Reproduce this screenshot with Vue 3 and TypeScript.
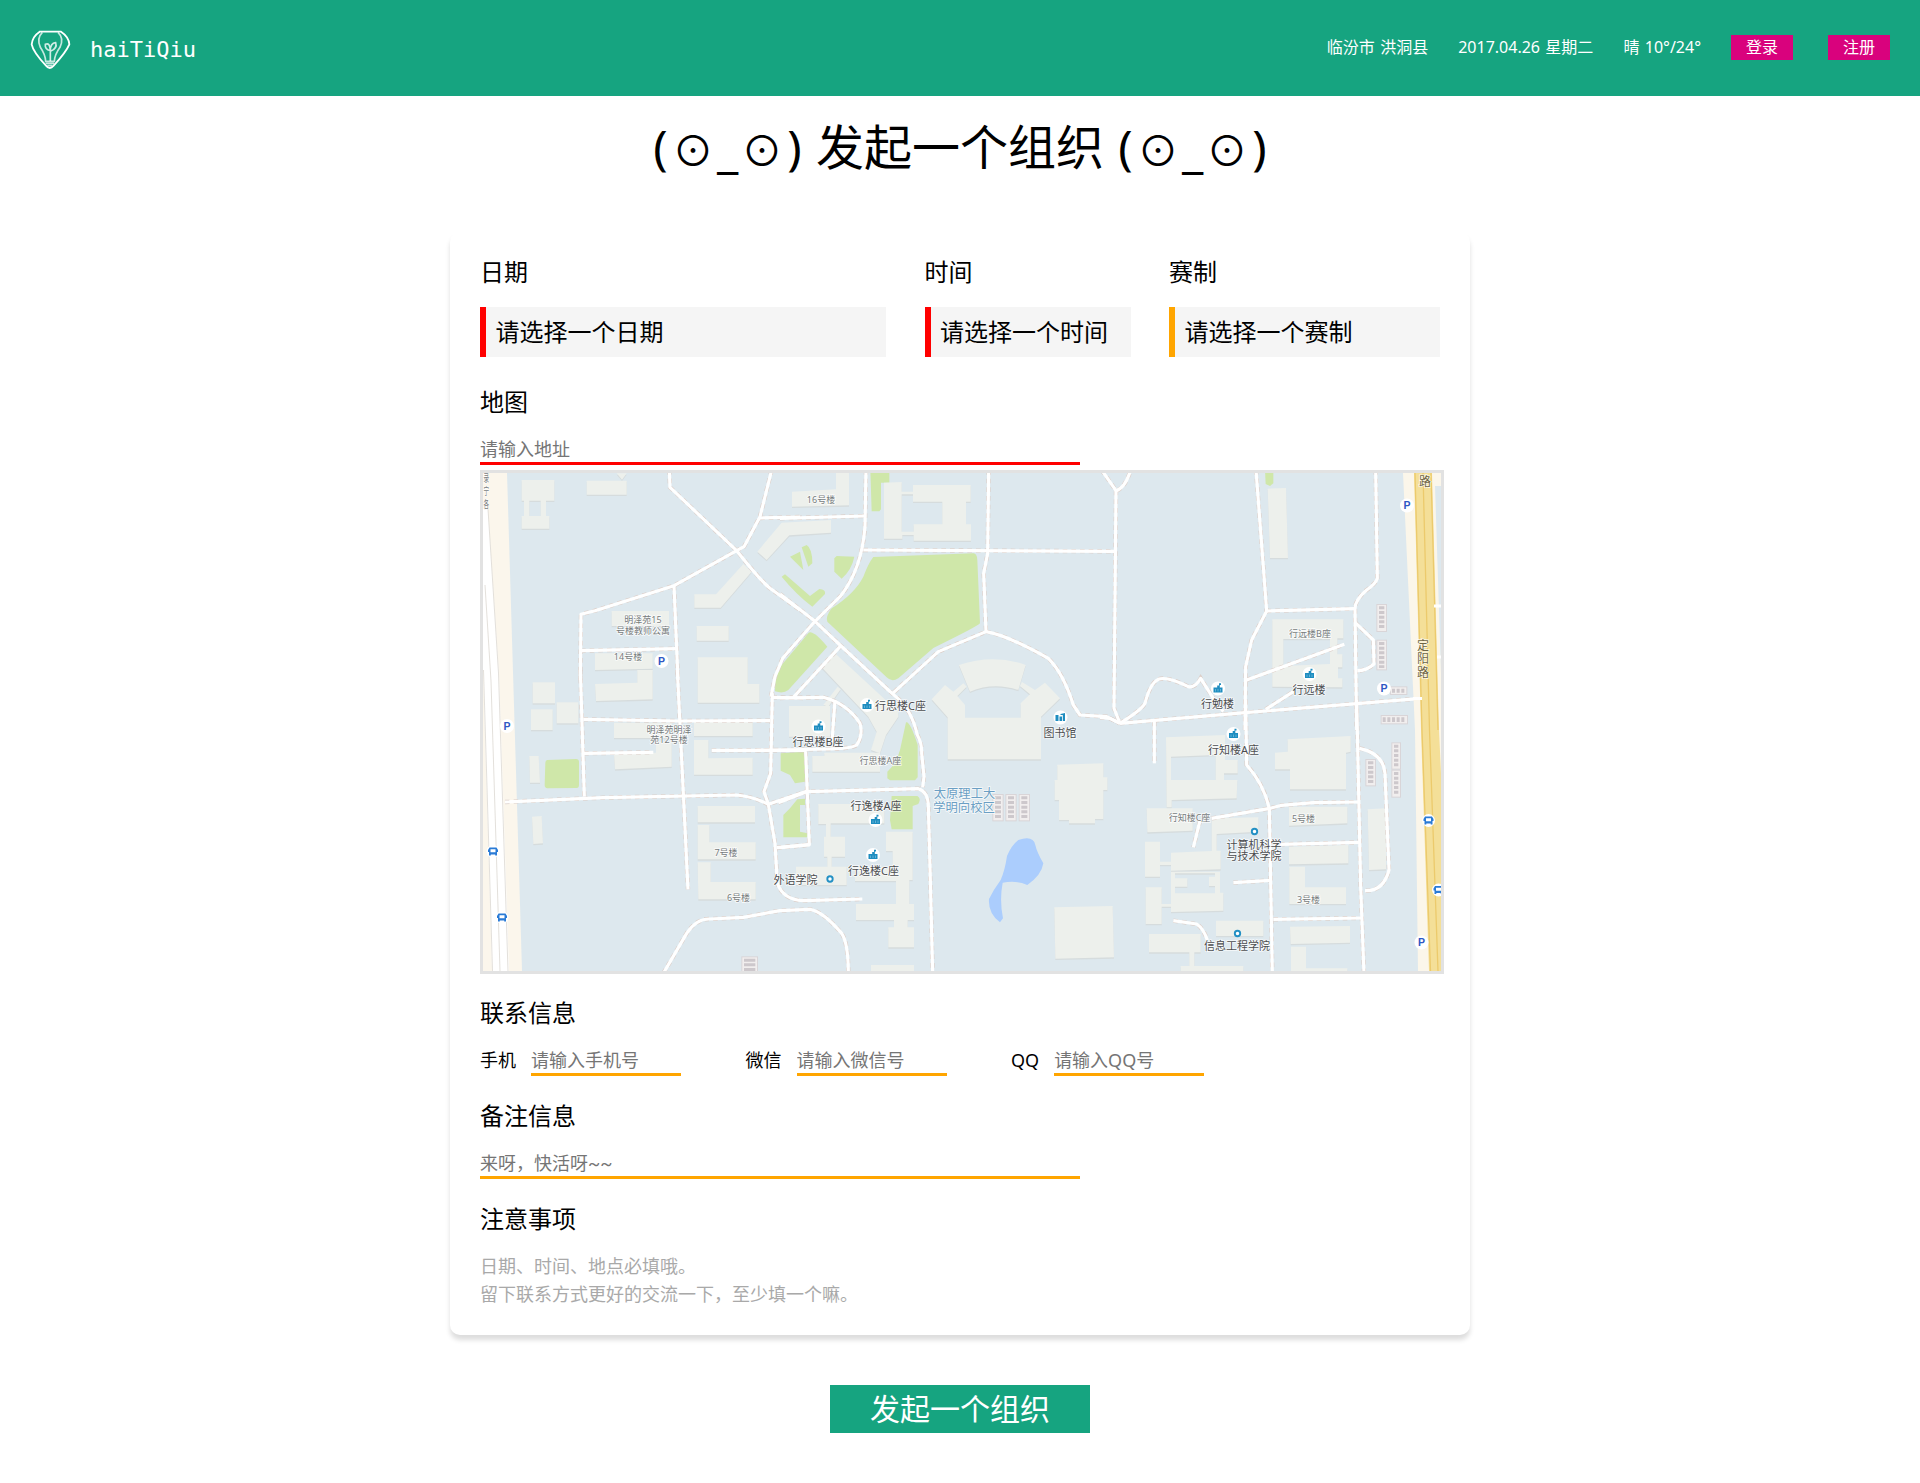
<script setup lang="ts">
import { ref } from 'vue'

interface Tile {
  x: number
  y: number
  parks: string[]
  buildings: string[]
  roads: string[]
  lots: [number, number, number, number, boolean][]
}

interface Label {
  x: number
  y: number
  t: string
  s: number
  c?: string
  w?: number
}

const address = ref('')
const remark = ref('')

const pickers = [
  { title: '日期', hint: '请选择一个日期', kind: 'date' },
  { title: '时间', hint: '请选择一个时间', kind: 'time' },
  { title: '赛制', hint: '请选择一个赛制', kind: 'format' }
]

const contacts = [
  { label: '手机', hint: '请输入手机号' },
  { label: '微信', hint: '请输入微信号' },
  { label: 'QQ', hint: '请输入QQ号' }
]

// Campus map, stored in tiles at three units per pixel.
const tiles: Tile[] = [
  {
    x: -13, y: -93,
    parks: [],
    buildings: [
      'M155 300H253V362H228V408H238V446H155V408H162V362H155ZM178 362V408H212V362Z',
      'M350 302H470V344H350Z', 'M440 280H470L456 299Z',
      'M1083 420V458L958 466L890 540L862 515L935 428Z',
      'M673 643H738L820 552L845 575L752 683H673Z',
      'M425 693H597V738H425Z', 'M680 738H776V782H680Z',
      'M375 820H548V866L375 870Z'
    ],
    roads: [
      'M598 270L600 322L800 512Q870 600 900 625L990 690',
      'M905 270L870 410L822 500L800 512L612 617L375 692L333 703L331 900',
      'M870 414L990 411', 'M612 617L624 900', 'M333 812L620 806'
    ],
    lots: []
  },
  {
    x: 297, y: -13,
    parks: [
      'M30 290L60 275L70 330Z', 'M65 262L80 255Q97 265 97 310L85 320Z',
      'M170 288L223 290Q215 330 185 356L163 335V295Z',
      'M5 350L15 343L90 408L118 387Q138 388 135 402L97 440Q50 405 5 350Z',
      'M271 30H328V68H303V148L298 154H275Z',
      'M280 291L580 280Q591 280 592 300L600 490Q595 498 460 564L355 655Q335 668 320 652L142 485Q136 470 155 445Q225 400 250 350Q265 310 280 291Z',
      'M86 518Q100 510 142 560L25 690Q10 702 -15 694L-14 655L5 615Z'
    ],
    buildings: [
      'M36 95L168 88V30H207V136L36 140Z', 'M312 68L365 66V95H399V75H572V125H558V193H573V242H401V225H367V236H312ZM365 103V215H401V193H487V125H399V103Z',
      'M165 580L355 755V770L318 825L300 880L273 870L290 815L265 770L125 622Z',
      'M130 735L173 680L182 688L145 740Z', 'M27 738H150V830H27Z',
      'M537 615Q640 580 737 615L715 690Q640 665 570 695Z',
      'M455 718L495 675L520 695L550 670L560 680L532 708L555 735V773H722V730L750 703L720 678L726 666L765 690L795 668L840 715L783 770V898H503V772Z'
    ],
    roads: [
      'M258 30L255 200Q245 330 180 410L105 484L8 595L-15 650L-27 710',
      'M0 175L255 168', 'M0 402L105 484L180 555L325 690L350 712Q395 750 412 825Q426 850 425 880L432 950L428 982',
      'M183 557L40 712', 'M250 270L1003 274',
      'M626 30L623 280L611 340L618 515L475 575L338 700',
      'M618 515Q680 525 805 595Q850 640 880 735L900 765L980 770L1020 790',
      'M0 714L130 712Q200 730 240 790Q250 825 230 855Q215 865 155 867L-70 871', 'M165 720L155 860'
    ],
    lots: []
  },
  {
    x: 617, y: -13,
    parks: ['M495 30H520V70L510 78L497 72Z'],
    buildings: [
      'M503 86L558 84L564 294H510Z',
      'M517 478H730V535H712V583H727V622H714V655H727V682L517 680ZM550 537V618L690 612V537Z'
    ],
    roads: [
      'M5 30L48 92Q75 85 92 30', 'M48 92L42 745L60 790',
      'M468 30L500 453L455 540L437 620L435 810', 'M500 453L765 446',
      'M827 30L832 355Q828 370 800 390Q765 420 765 446L770 810',
      'M765 487L820 540L822 612Q800 632 772 632', 'M440 660L733 553',
      'M60 790L435 758L965 715', 'M497 748L580 695',
      'M60 790Q125 750 135 730Q150 670 175 658Q200 648 265 680Q285 685 302 655L340 715L370 755',
      'M0 772L30 775L60 790', 'M163 785V910'
    ],
    lots: [[832, 435, 26, 78, false], [832, 542, 26, 86, false], [873, 682, 46, 20, true], [845, 768, 76, 22, true]]
  },
  {
    x: -13, y: 197,
    parks: ['M232 270L318 267Q327 268 327 275V345Q327 354 320 354L232 355Q224 354 224 346L226 278Q226 271 232 270Z'],
    buildings: [
      'M683 -38H833V42H868V98H683Z', 'M502 0H548V88L378 93L375 42L502 38Z',
      'M188 37H255V100H188Z', 'M183 118H248V180H183Z', 'M260 97H325V160H260Z',
      'M178 258H206L210 338H180Z', 'M186 440L215 438L219 520L190 522Z',
      'M432 158H605V204H432Z', 'M672 155H848V198H672Z',
      'M672 210H715V265L848 263V314H672Z', 'M558 215H605V290L435 298L432 253L558 248Z',
      'M683 408H855V457H683Z', 'M683 465H718V517H857V568H683Z', 'M683 577H722V636H857V688H685Z'
    ],
    roads: [
      'M331 0L343 380', 'M622 0L640 370L654 658', 'M340 148L627 153L900 152', 'M342 250L550 247', 'M725 241H1010',
      'M105 396L400 383L800 375Q850 380 895 403L1010 364',
      'M907 70L902 310L882 365L895 403L915 520L922 640Q940 690 1000 692L1177 687',
      'M907 82L1000 84', 'M920 533L1020 524',
      'M580 910L650 790Q680 745 720 747L820 742L930 722L1020 718Q1060 725 1115 790Q1135 820 1135 910'
    ],
    lots: [[817, 862, 44, 48, false]]
  },
  {
    x: 297, y: 227,
    parks: [
      'M2 160L75 155V245L45 250L30 225L2 212Z',
      'M52 298L75 296V315H60V395L83 400L82 412H10V345L30 325Z',
      'M378 67Q390 62 413 135V232L405 241H330L322 235V215Q350 190 360 150Z',
      'M335 288H412Q425 295 415 312L398 318V388H335L330 360Z'
    ],
    buildings: [
      'M97 168H133V158H300V215H97Z', 'M115 312H313V370H152V410H195V470H155V500H200V555H48V500H142V470H132V410H138V372H115Z',
      'M318 395H398V540H388V612H402V660H383V682H402V742H325V682H342V660H228V612H348V543H225V500H338V453H318Z',
      'M273 795H402V820H273Z',
      'M832 194L970 190V232H982V270H970V357H945V370H867V360H837V300H824V240H832Z',
      'M823 622L998 618L1002 772L826 776Z'
    ],
    roads: ['M77 155L88 434L0 443', 'M-5 308L80 275L200 272L415 266Q445 275 445 320L450 500L458 820'],
    lots: [[640, 285, 28, 76, false], [679, 285, 28, 76, false], [719, 285, 28, 76, false]]
  },
  {
    x: 617, y: 227,
    parks: [],
    buildings: [
      'M198 112L375 105V180H413V220H372V240H412L410 295L215 300V322H200ZM213 170V240H347V165Z',
      'M563 118L752 108V155L738 158V268H570V208H525V158L563 155Z',
      'M140 325H278V392L142 397Z', 'M335 355L475 352V395L350 402V452H362V508L213 512V495H180V530H135V425H180V485H213V458L335 453Z',
      'M137 562H185V612H213V515H360V578H370V632L213 636V620H185V672H137ZM225 520V535H262V560H225V580H345V558H327V530H345V520Z',
      'M147 702H302V757H283V798H430V820H242V798H268V757H147Z', 'M348 662H490V708H348Z',
      'M567 320H742V370L567 377Z', 'M567 440L745 435V490L567 493Z', 'M568 500H615V562H738V612H568Z',
      'M570 680L750 678V728L572 732Z', 'M573 740H618V805H742V820H573Z', 'M803 328L858 325V508L807 510Z'
    ],
    roads: [
      'M437 0L440 195Q490 250 508 325L517 820', 'M335 355L510 325L545 316L640 308L778 306',
      'M770 0L782 560L792 820', 'M778 145Q850 160 855 220L867 510Q850 575 795 572',
      'M300 362L280 442', 'M540 433L778 427', 'M400 548L512 541', 'M520 658L785 654',
      'M220 662L290 672Q310 685 322 720'
    ],
    lots: [[877, 130, 23, 76, false], [877, 212, 23, 78, false], [799, 180, 26, 76, false]]
  }
]

const gray = '#777b7d'
const blue = '#6b9fc4'
const brown = '#6f6544'
const labels: Label[] = [
  { x: 160, y: 150, t: '明泽苑15', s: 9, c: gray },
  { x: 160, y: 160.5, t: '号楼教师公寓', s: 9, c: gray },
  { x: 145, y: 187, t: '14号楼', s: 9, c: gray },
  { x: 338, y: 30, t: '16号楼', s: 9, c: gray },
  { x: 186, y: 260, t: '明泽苑明泽', s: 9, c: gray },
  { x: 186, y: 270, t: '苑12号楼', s: 9, c: gray },
  { x: 243, y: 382.5, t: '7号楼', s: 9, c: gray },
  { x: 255.5, y: 427.500, t: '6号楼', s: 9, c: gray },
  { x: 417.5, y: 237, t: '行思楼C座', s: 11 },
  { x: 335, y: 272.5, t: '行思楼B座', s: 11 },
  { x: 397.5, y: 291, t: '行思楼A座', s: 9, c: gray },
  { x: 393, y: 336.5, t: '行逸楼A座', s: 11 },
  { x: 390.5, y: 401.5, t: '行逸楼C座', s: 11 },
  { x: 312.5, y: 411, t: '外语学院', s: 11 },
  { x: 577, y: 264, t: '图书馆', s: 11 },
  { x: 481.5, y: 324.5, t: '太原理工大', s: 12.3, c: blue },
  { x: 481, y: 338.5, t: '学明向校区', s: 12.3, c: blue },
  { x: 734.5, y: 235, t: '行勉楼', s: 11 },
  { x: 827, y: 164, t: '行远楼B座', s: 9, c: gray },
  { x: 826, y: 221, t: '行远楼', s: 11 },
  { x: 750.5, y: 281, t: '行知楼A座', s: 11 },
  { x: 706.5, y: 348, t: '行知楼C座', s: 9, c: gray },
  { x: 820.5, y: 349, t: '5号楼', s: 9, c: gray },
  { x: 825.5, y: 429.5, t: '3号楼', s: 9, c: gray },
  { x: 771, y: 375.5, t: '计算机科学', s: 11 },
  { x: 771, y: 387, t: '与技术学院', s: 11 },
  { x: 754, y: 477, t: '信息工程学院', s: 11 },
  { x: 942, y: 13, t: '路', s: 12, c: brown },
  { x: 940, y: 176.5, t: '定', s: 12, c: brown },
  { x: 940, y: 190.3, t: '阳', s: 12, c: brown },
  { x: 940, y: 204, t: '路', s: 12, c: brown },
  { x: 3.2, y: 8.8, t: '录', s: 10, c: gray, w: 5.6 },
  { x: 3.2, y: 21.5, t: '宁', s: 10, c: gray, w: 5.6 },
  { x: 3.2, y: 35, t: '各', s: 10, c: gray, w: 5.6 }
]

const parking = [[178.5, 188], [24, 253], [924, 32.5], [901, 215.5], [938.5, 469.5]]
const schools = [[384, 232], [335.5, 253.5], [392.5, 347], [390, 382], [735, 215.5], [826.5, 201], [750.5, 261]]
const buses = [[10, 378.5], [19, 444.5], [945.5, 347.5], [955.5, 417]]
const dots = [[347, 406], [771.5, 358.5], [754.5, 460.5]]
</script>

<template>
  <div class="page">
    <header class="bar">
      <div class="brand">
        <svg class="logo" viewBox="90 90 123 120" fill="none" stroke="#fff">
          <path stroke-width="5.500" d="M119 95H183Q207 111 208 133Q199 155 161 197Q149 211 138 197Q99 155 95 133Q97 110 119 95Z" />
          <path stroke-width="5" opacity=".75" d="M127 97Q109 115 121 142Q136 164 137 184H163Q164 164 180 142Q193 115 174 97M137 190H162M142 197H157" />
          <path stroke-width="5" opacity=".8" d="M151 183V152Q134 148 136 133Q150 126 151 152Q151 129 167 128Q173 145 151 154" />
        </svg>
        <span class="name">haiTiQiu</span>
      </div>
      <nav class="info">
        <span class="place">临汾市 洪洞县</span>
        <span class="day">2017.04.26 星期二</span>
        <span class="weather">晴 10°/24°</span>
        <a class="tag">登录</a>
        <a class="tag">注册</a>
      </nav>
    </header>

    <h1 class="title">
      <span class="face"><i>(</i><b>⊙</b><u>_</u><b>⊙</b><i>)</i></span>
      <span>发起一个组织</span>
      <span class="face"><i>(</i><b>⊙</b><u>_</u><b>⊙</b><i>)</i></span>
    </h1>

    <main class="panel">
      <div class="pickers">
        <section v-for="p in pickers" :key="p.kind" :class="['picker', p.kind]">
          <h2>{{ p.title }}</h2>
          <div class="field">{{ p.hint }}</div>
        </section>
      </div>

      <h2 class="map-title">地图</h2>
      <input v-model="address" class="line required" placeholder="请输入地址" />
      <div class="map">
        <svg viewBox="0 0 958 498" width="958" height="498">
          <rect width="958" height="498" fill="#dde8ee" />
          <path fill="#fbf6ec" d="M0 0H24L39 498H0Z" />
          <path fill="#fff" d="M0 36L5 36L16 200L26 498H9L0 197Z" />
          <path fill="none" stroke="#dcd8d2" stroke-width=".8" d="M5 36L15.500 200L25 498M2 112L8 208L17 498M.5 197L9.500 498" />

          <g v-for="(tile, i) in tiles" :key="'a' + i" :transform="`translate(${tile.x} ${tile.y}) scale(.33333)`">
            <path v-for="(d, n) in tile.parks" :key="'p' + n" :d="d" class="park" />
            <g v-for="(d, n) in tile.buildings" :key="'b' + n" fill-rule="evenodd">
              <path :d="d" class="shade" transform="translate(0 4)" />
              <path :d="d" class="building" />
            </g>
          </g>
          <path fill="#abcdfd" transform="translate(297 227) scale(.33333)" d="M715 420Q760 405 766 435Q770 455 790 490Q785 525 742 555Q710 540 668 548Q658 600 669 655L660 667Q624 640 627 597Q640 570 662 540Q675 510 681 468Q695 435 715 420Z" />

          <g v-for="(tile, i) in tiles" :key="'c' + i" :transform="`translate(${tile.x} ${tile.y}) scale(.33333)`">
            <path v-for="(d, n) in tile.roads" :key="'k' + n" :d="d" class="casing" />
          </g>
          <g v-for="(tile, i) in tiles" :key="'r' + i" :transform="`translate(${tile.x} ${tile.y}) scale(.33333)`">
            <path v-for="(d, n) in tile.roads" :key="'w' + n" :d="d" class="road" />
            <g v-for="(l, n) in tile.lots" :key="'l' + n">
              <rect :x="l[0] - 3" :y="l[1] - 3" :width="l[2] + 6" :height="l[3] + 6" fill="#d9d5d8" />
              <rect :x="l[0]" :y="l[1]" :width="l[2]" :height="l[3]" fill="#f1eeee" />
              <path v-if="l[4]" :d="`M${l[0] + 3} ${l[1] + l[3] / 2}h${l[2] - 6}`" class="stalls" :stroke-width="l[3] - 8" />
              <path v-else :d="`M${l[0] + l[2] / 2} ${l[1] + 4}v${l[3] - 8}`" class="stalls" :stroke-width="l[2] - 10" />
            </g>
          </g>

          <path fill="#fbf6ea" d="M920 0H958V498H935L932 257Z" />
          <path fill="#dde8ee" d="M952 13H958V200Z" />
          <path fill="#f4df98" d="M931 0H949L956 257L958 300V498H946L938 257Z" />
          <path fill="none" stroke="#ecca6c" stroke-width="1.300" d="M940 0L946.500 257L955 498M932 0L939 257L947.500 498M948 0L955 257" />
          <path fill="none" stroke="#fff" stroke-width="3" d="M951 133H958M954 184H958M930 225.500H939" />

          <g v-for="(p, i) in parking" :key="'park' + i" :transform="`translate(${p[0]} ${p[1]})`">
            <circle r="7" fill="#fff" />
            <text y="3.800" class="p">P</text>
          </g>
          <g v-for="(p, i) in schools" :key="'school' + i" :transform="`translate(${p[0]} ${p[1]})`">
            <circle r="7" fill="#fff" />
            <path fill="#1e8dc0" d="M-4.500 -1H-.8V-3H1V-5.300H3V-3.500H1.800V-1H4.500V4H-4.500Z" />
            <path stroke="#8fcbe4" stroke-width=".6" d="M-2.500 .5V3M2.500 .5V3M0 .5V3" />
          </g>
          <g v-for="(p, i) in buses" :key="'bus' + i" :transform="`translate(${p[0]} ${p[1]})`">
            <circle r="6.500" fill="#fff" />
            <path fill="#2a7bd6" fill-rule="evenodd" d="M-3.500 -4H3.500L5 -1.500V.5H4V4H2.200V3H-2.200V4H-4V.5H-5V-1.500ZM-2.500 -2.300V.8H2.500V-2.300Z" />
          </g>
          <circle v-for="(p, i) in dots" :key="'dot' + i" :cx="p[0]" :cy="p[1]" r="2.700" fill="#fff" stroke="#2390c4" stroke-width="1.900" />
          <g transform="translate(577.500 244.500)">
            <circle r="7" fill="#fff" />
            <path fill="#1e8dc0" d="M-5 -2.500H-2V3.500H-5ZM-1 -1H1.500V3.500H-1ZM0 -3.500L4.500 -4.500V3.500H2.300V-2.500H0Z" />
          </g>
          <text v-for="(l, i) in labels" :key="'t' + i" :x="l.x" :y="l.y" :font-size="l.s" :fill="l.c || '#4b4d50'" :textLength="l.w" lengthAdjust="spacingAndGlyphs" class="label">{{ l.t }}</text>
        </svg>
      </div>

      <h2 class="next">联系信息</h2>
      <div class="contacts">
        <label v-for="c in contacts" :key="c.label">
          <span>{{ c.label }}</span>
          <input class="line short" :placeholder="c.hint" />
        </label>
      </div>

      <h2 class="next">备注信息</h2>
      <input v-model="remark" class="line remark" placeholder="来呀，快活呀~~" />

      <h2 class="next">注意事项</h2>
      <p class="notes">日期、时间、地点必填哦。<br />留下联系方式更好的交流一下，至少填一个嘛。</p>
    </main>

    <button class="submit">发起一个组织</button>
  </div>
</template>

<style>
body {
  margin: 0;
  background: #fff;
}
</style>

<style scoped>
.page {
  height: 1483px;
  overflow: hidden;
  color: #000;
  font-family: 'Noto Sans', 'Noto Sans CJK SC', sans-serif;
}
.bar {
  height: 96px;
  box-sizing: border-box;
  padding: 0 30px;
  background: #16a480;
  color: #fff;
  display: flex;
  justify-content: space-between;
}
.brand {
  display: flex;
  align-items: center;
  padding-top: 4px;
}
.logo {
  width: 41px;
  height: 40px;
}
.name {
  margin-left: 19px;
  font: 22px/30px 'DejaVu Sans Mono', monospace;
}
.info {
  display: flex;
  align-items: center;
  padding-bottom: 1px;
  font-size: 16px;
  line-height: 25px;
  word-spacing: 1.2px;
  white-space: nowrap;
}
.info span {
  margin-right: 30px;
}
.tag {
  width: 62px;
  height: 25px;
  background: #d9027d;
  text-align: center;
}
.tag + .tag {
  margin-left: 35px;
}
.title {
  margin: 0;
  height: 136px;
  display: flex;
  justify-content: center;
  gap: 13px;
  font-size: 48px;
  font-weight: 400;
  line-height: 102px;
  white-space: nowrap;
}
.face {
  display: flex;
}
.face i,
.face b,
.face u {
  font-style: normal;
  font-weight: 400;
  text-decoration: none;
  text-align: center;
}
.face i {
  width: 17px;
}
.face b {
  width: 48px;
  font-size: 41px;
  line-height: 109px;
}
.face u {
  width: 21px;
  line-height: 108px;
}
.panel {
  width: 1020px;
  height: 1103px;
  margin: 0 auto;
  box-sizing: border-box;
  padding: 25px 0 0 30px;
  border-radius: 10px;
  box-shadow: 0 5px 5px #ddd;
}
h2 {
  margin: 0;
  font-size: 24px;
  font-weight: 400;
  line-height: 30px;
}
.pickers {
  display: flex;
}
.date {
  width: 406px;
  margin-right: 38.5px;
}
.time {
  width: 206px;
  margin-right: 38.5px;
}
.format {
  width: 271px;
}
.field {
  margin-top: 20px;
  height: 50px;
  box-sizing: border-box;
  padding-left: 9.5px;
  border-left: 6px solid #f00;
  background: #f5f5f5;
  font-size: 24px;
  line-height: 50px;
  white-space: nowrap;
}
.format .field {
  border-left-color: orange;
}
.map-title {
  margin-top: 30px;
}
.line {
  display: block;
  width: 600px;
  height: 29px;
  margin: 19px 0 0;
  padding: 0;
  box-sizing: border-box;
  border: 0;
  border-bottom: 3px solid orange;
  outline: none;
  background: transparent;
  font: inherit;
  font-size: 18px;
  line-height: 26px;
}
.line::placeholder {
  color: #757575;
}
.required {
  border-bottom-color: #f00;
}
.remark {
  font-family: Roboto, 'Noto Sans CJK SC', sans-serif;
}
.map {
  width: 958px;
  height: 498px;
  margin-top: 5px;
  border: 3px solid #e2e2e2;
}
.map svg {
  display: block;
}
.park {
  fill: #cfe7a9;
}
.building {
  fill: #edf0ec;
}
.shade {
  fill: #d6dcdd;
}
.casing {
  fill: none;
  stroke: #dccfc9;
  stroke-width: 13px;
  stroke-dasharray: 14 12;
}
.road {
  fill: none;
  stroke: #fff;
  stroke-width: 9.5px;
  stroke-linejoin: round;
}
.stalls {
  fill: none;
  stroke: #cdc8cc;
  stroke-dasharray: 9 5;
}
.p {
  fill: #2f58c4;
  font: bold 10.5px 'Liberation Sans', sans-serif;
  text-anchor: middle;
}
.label {
  text-anchor: middle;
  paint-order: stroke;
  stroke: rgba(255, 255, 255, 0.75);
  stroke-width: 1.6px;
  font-family: 'Noto Sans', 'Noto Sans CJK SC', sans-serif;
}
.next {
  margin-top: 25px;
}
.map + .next {
  margin-top: 24px;
}
.contacts {
  display: flex;
  gap: 64.5px;
  margin-top: 19px;
  font-size: 18px;
  line-height: 26px;
}
.contacts label {
  display: flex;
}
.short {
  width: 150px;
  margin: 0 0 0 15px;
}
.notes {
  margin: 18px 0 0;
  color: #a9a9a9;
  font-size: 18px;
  line-height: 28px;
}
.submit {
  display: block;
  width: 260px;
  height: 48px;
  margin: 50px auto 0;
  padding: 0;
  border: 0;
  background: #16a480;
  color: #fff;
  font: inherit;
  font-size: 30px;
  line-height: 48px;
}
</style>
